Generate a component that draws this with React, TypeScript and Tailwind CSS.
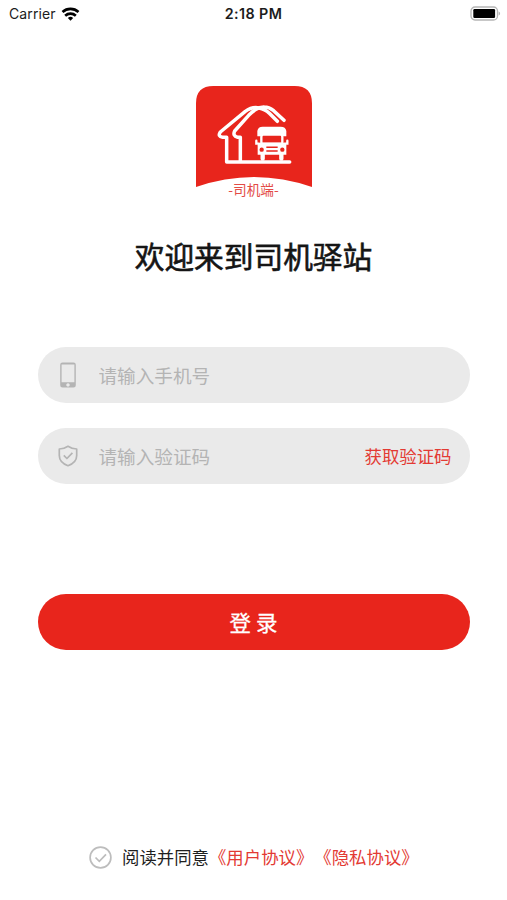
import { useState } from "react";

function StatusBar() {
  return (
    <div className="grid h-[27px] grid-cols-3 items-center pl-[9px] pr-[6px] font-['Inter',sans-serif] text-[14px] text-[#1c1c1c]">
      <div className="flex items-center gap-[5px]">
        <span className="tracking-[0.1px]">Carrier</span>
        <svg width="19" height="14" viewBox="0 0 54 42" fill="none" stroke="#000" strokeWidth="8">
          <path d="M3 15a36 36 0 0 1 48 0" />
          <path d="M11 26a24 24 0 0 1 32 0" />
          <path d="M27 41l-8-8a12 12 0 0 1 16 0z" fill="#000" stroke="none" />
        </svg>
      </div>
      <span className="-ml-[3px] whitespace-nowrap text-center text-[14.3px] font-semibold tracking-[0.4px]">2:18 PM</span>
      <svg className="justify-self-end" width="31" height="15" viewBox="0 0 31 15">
        <rect x="1" y="1" width="26.5" height="13" rx="4" fill="#fff" stroke="#b5b5b5" strokeWidth="1.3" />
        <rect x="3.3" y="3" width="21.8" height="9" rx="1.2" fill="#000" />
        <path d="M28.6 5.5v4c2-.7 2-3.3 0-4z" fill="#b5b5b5" />
      </svg>
    </div>
  );
}

function Logo() {
  return (
    <div className="flex flex-col items-center">
      <svg width="116" height="101" viewBox="33 30 348 303" fill="none">
        <path d="M33 333V82q0-52 52-52h244q52 0 52 52v251Q207 273 33 333z" fill="#e8251c" />
        <g stroke="#fff" strokeWidth="10.5" strokeLinecap="round" strokeLinejoin="round">
          <path d="M314 258H125V184h-12q-16-3-7-16l74-61q22-16 42-11 18 3 31 16l24 24" />
          <path d="M166 256V184h-8q-16-4-9-19l42-47q25-26 47-25 14 0 28 11l31 29" />
        </g>
        <path d="M217 181v-16q2-13 16-13h54q15 0 17 13v16h-10l-6-6h-55l-6 6z" fill="#fff" />
        <path d="M235 176h51q6 0 6 7v20h-63v-20q0-7 6-7z" fill="#e8251c" stroke="#fff" strokeWidth="7" />
        <path d="M214 194v9h8M307 194v9h-8" stroke="#fff" strokeWidth="7" strokeLinecap="round" />
        <path d="M218 208q0-8 8-8h70q8 0 8 8v28h-86z" fill="#fff" />
        <path d="M233 235v13M289 235v13" stroke="#fff" strokeWidth="13" strokeLinecap="round" />
        <circle cx="230" cy="221" r="6.5" fill="#e8251c" />
        <circle cx="292" cy="221" r="6.5" fill="#e8251c" />
        <path d="M244 214h34M244 225h34" stroke="#e8251c" strokeWidth="4.5" />
      </svg>
      <span className="-mt-2 text-[13.7px] leading-5 text-[#e34b45]">-司机端-</span>
    </div>
  );
}

function PhoneIcon() {
  return (
    <svg width="20" height="26" viewBox="0 0 20 26">
      <path
        fillRule="evenodd"
        d="M4.5.5h11q2.3 0 2.3 2.3v20.4q0 2.3-2.3 2.3h-11q-2.3 0-2.3-2.3V2.8Q2.2.5 4.5.5zM3.6 2.4v17.9h12.8V2.4zM10 21.2a1.7 1.7 0 1 0 .01 0z"
        fill="#b4b4b4"
      />
    </svg>
  );
}

function ShieldIcon() {
  return (
    <svg width="20" height="22" viewBox="0 0 20 22" fill="none" stroke="#b4b4b4" strokeWidth="1.7" strokeLinejoin="round">
      <path d="M10 1.3Q14 4 18.7 4v6.5c0 5-3.7 8.4-8.7 10.2-5-1.8-8.7-5.2-8.7-10.2V4Q6 4 10 1.3z" />
      <path d="M5.8 10.4l3.1 3.1 5.5-5.6" />
    </svg>
  );
}

const inputClass =
  "ml-[21px] min-w-0 flex-1 bg-transparent text-[18.6px] text-[#333] outline-none placeholder:text-[#b4b4b4] placeholder:opacity-100";

function App() {
  const [phone, setPhone] = useState("");
  const [code, setCode] = useState("");

  return (
    <div className="flex h-[900px] w-[507px] flex-col overflow-hidden bg-white font-['Noto_Sans_CJK_SC',sans-serif]">
      <StatusBar />
      <div className="mt-[59px]">
        <Logo />
      </div>
      <h1 className="mt-[35px] text-center text-[29.7px] leading-[44px] text-[#151515] [-webkit-text-stroke:0.6px_#151515]">
        欢迎来到司机驿站
      </h1>

      <div className="mx-[37.5px] mt-[69px] flex flex-col gap-[25px]">
        <label className="flex h-14 items-center rounded-full bg-[#eaeaea] pl-5 pr-[18px]">
          <PhoneIcon />
          <input
            className={inputClass}
            placeholder="请输入手机号"
            value={phone}
            onChange={(e) => setPhone(e.target.value)}
          />
        </label>
        <div className="flex h-14 items-center rounded-full bg-[#eaeaea] pl-5 pr-[18px]">
          <ShieldIcon />
          <input
            className={inputClass}
            placeholder="请输入验证码"
            value={code}
            onChange={(e) => setCode(e.target.value)}
          />
          <button className="text-[17.4px] text-[#e33a33]">获取验证码</button>
        </div>
      </div>

      <button className="mx-[37.5px] mt-[110px] h-14 rounded-full bg-[#e8251c] text-[21.5px] text-white [-webkit-text-stroke:0.3px_#fff]">
        登 录
      </button>

      <div className="mt-[194px] flex items-center pl-[89px] text-[17.4px] leading-[26px] [text-spacing-trim:space-all]">
        <svg className="mr-[10px]" width="23" height="23" viewBox="0 0 23 23" fill="none" stroke="#bdbdbd" strokeWidth="1.7">
          <circle cx="11.5" cy="11.5" r="10.4" />
          <path d="M6.5 11.5l3.8 3.8 6.7-7" />
        </svg>
        <span className="text-[#1f1f1f]">阅读并同意</span>
        <a className="text-[#e33a33]">《用户协议》</a>
        <a className="ml-px text-[#e33a33]">《隐私协议》</a>
      </div>
    </div>
  );
}

export default App;
